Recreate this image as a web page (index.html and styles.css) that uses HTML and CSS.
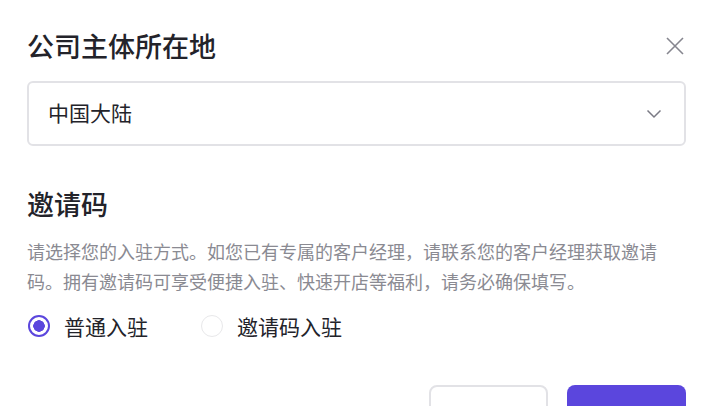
FILE: index.html
```html
<!DOCTYPE html>
<html lang="zh-CN">
<head>
  <meta charset="UTF-8" />
  <meta name="viewport" content="width=device-width, initial-scale=1.0"/>
  <title>公司主体所在地</title>
  <link rel="stylesheet" href="styles.css">
</head>
<body>

  <div class="dialog" role="dialog">
    <div class="dialog-head">
      <h2>公司主体所在地</h2>
      <button class="close" aria-label="关闭">
        <svg width="20" height="20" viewBox="0 0 20 20"><path d="M2 2L18 18M18 2L2 18" stroke="#86868f" stroke-width="1.6" fill="none"/></svg>
      </button>
    </div>

    <div class="select">
      <span>中国大陆</span>
      <svg width="16" height="10" viewBox="0 0 16 10"><path d="M1.5 1.5L8 8L14.5 1.5" stroke="#7a7a84" stroke-width="1.5" fill="none"/></svg>
    </div>

    <h2 class="section-title">邀请码</h2>
    <p class="desc">请选择您的入驻方式。如您已有专属的客户经理，请联系您的客户经理获取邀请码。拥有邀请码可享受便捷入驻、快速开店等福利，请务必确保填写。</p>

    <div class="radios">
      <label class="radio checked"><span class="dot"></span>普通入驻</label>
      <label class="radio"><span class="dot"></span>邀请码入驻</label>
    </div>

    <div class="footer">
      <button class="btn btn-default"></button>
      <button class="btn btn-primary"></button>
    </div>
  </div>

</body>
</html>
```

FILE: styles.css
```css
:root {
  --purple: #5b46dd;
  --text: #23232a;
  --muted: #8a8a92;
  --border: #e2e2e6;
}

* {
  box-sizing: border-box;
}

body {
  margin: 0;
  font-family: "Noto Sans CJK SC", "Noto Sans", sans-serif;
  background: #fff;
  color: var(--text);
}

.dialog {
  padding: 26px 28px 0 27px;
  width: 714px;
  height: 406px;
  overflow: hidden;
}

.dialog-head {
  display: flex;
  justify-content: space-between;
  align-items: center;
  height: 40px;
}

h2 {
  margin: 0;
  font-size: 27px;
  font-weight: 500;
  line-height: 40px;
}

.close {
  background: none;
  border: none;
  padding: 0;
  margin-right: 1px;
  display: flex;
  cursor: pointer;
}

.select {
  margin-top: 15px;
  height: 65px;
  border: 2px solid var(--border);
  border-radius: 6px;
  display: flex;
  align-items: center;
  justify-content: space-between;
  padding: 0 22px 3px 19px;
  font-size: 21px;
}

.select svg {
  margin-top: 3px;
}

.section-title {
  margin-top: 38px;
}

.desc {
  margin: 12px 0 0;
  font-size: 18px;
  line-height: 30px;
  color: var(--muted);
}

.radios {
  display: flex;
  gap: 52px;
  margin-top: 15px;
  font-size: 21px;
  line-height: 30px;
}

.radio {
  display: flex;
  align-items: center;
  gap: 14px;
}

.dot {
  width: 22px;
  height: 22px;
  border-radius: 50%;
  border: 1.5px solid #e8e8ea;
  margin-left: 1px;
}

.checked .dot {
  border: 2.5px solid var(--purple);
  background: radial-gradient(circle, var(--purple) 0 5.5px, #fff 6px);
}

.footer {
  display: flex;
  justify-content: flex-end;
  gap: 19px;
  margin-top: 44px;
}

.btn {
  width: 119px;
  height: 44px;
  border-radius: 8px;
  border: none;
}

.btn-default {
  background: #fff;
  border: 2px solid var(--border);
}

.btn-primary {
  background: var(--purple);
}
```
